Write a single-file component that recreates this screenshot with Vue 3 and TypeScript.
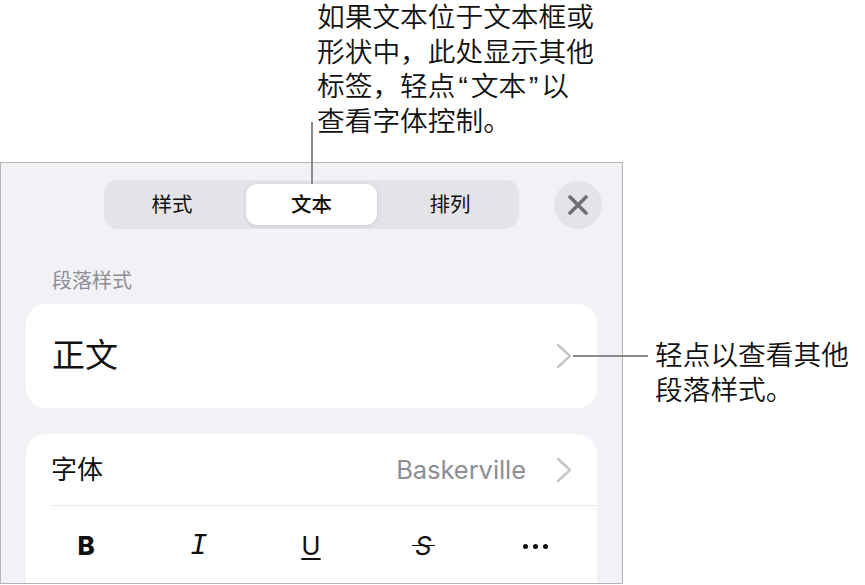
<script setup lang="ts">
const tabs: { label: string; active?: boolean }[] = [
  { label: '样式' },
  { label: '文本', active: true },
  { label: '排列' },
]
</script>

<template>
  <div class="page">
    <div class="top-note">
      <div>如果文本位于文本框或</div>
      <div>形状中，此处显示其他</div>
      <div>标签，轻点<span class="quote">“</span>文本<span class="quote">”</span>以</div>
      <div>查看字体控制。</div>
    </div>
    <section class="panel">
      <header class="bar">
        <div class="seg">
          <button v-for="t in tabs" :key="t.label" class="tab" :class="{ active: t.active }">{{ t.label }}</button>
        </div>
        <button class="close" aria-label="关闭">
          <svg width="20" height="20" viewBox="0 0 20 20"><path d="M2 2 18 18M18 2 2 18" stroke="#6f6f74" stroke-width="3.6" stroke-linecap="round" fill="none" /></svg>
        </button>
      </header>
      <div class="label">段落样式</div>
      <div class="card style-row">
        <span class="body-name">正文</span>
        <svg class="chev" width="16" height="26" viewBox="0 0 16 26"><path d="M2 2 14 13 2 24" stroke="#c5c5c7" stroke-width="2.4" fill="none" stroke-linecap="round" stroke-linejoin="round" /></svg>
      </div>
      <div class="card font-card">
        <div class="font-row">
          <span class="font-label">字体</span>
          <span class="font-val">Baskerville</span>
          <svg class="chev" width="16" height="26" viewBox="0 0 16 26"><path d="M2 2 14 13 2 24" stroke="#c5c5c7" stroke-width="2.4" fill="none" stroke-linecap="round" stroke-linejoin="round" /></svg>
        </div>
        <div class="fmt-row">
          <span class="fmt b">B</span>
          <span class="fmt i">I</span>
          <span class="fmt u">U</span>
          <span class="fmt s">S</span>
          <span class="fmt dots"><i></i><i></i><i></i></span>
        </div>
      </div>
    </section>
    <div class="leader-v"></div>
    <div class="leader-h"></div>
    <div class="side-note">
      <div>轻点以查看其他</div>
      <div>段落样式。</div>
    </div>
  </div>
</template>

<style scoped>
.page {
  position: relative;
  width: 865px;
  height: 585px;
  background: #fff;
  overflow: hidden;
  font-family: "Noto Sans CJK SC", "Noto Sans", sans-serif;
  color: #111;
}
.top-note {
  height: 162px;
  box-sizing: border-box;
  padding: 1px 0 0 317px;
  font-family: "Liberation Sans", "Noto Sans CJK SC", sans-serif;
  font-size: 27.7px;
  font-weight: 350;
  line-height: 34.5px;
  white-space: nowrap;
}
.quote {
  padding: 0 3px;
}
.panel {
  width: 623px;
  height: 422px;
  box-sizing: border-box;
  border: 1px solid #b4b4b4;
  background: #f1f1f6;
  padding: 17px 0 0 25px;
  overflow: hidden;
}
.bar {
  display: flex;
  align-items: center;
  margin-left: 78px;
  gap: 35px;
}
.seg {
  flex: none;
  width: 415px;
  height: 49px;
  box-sizing: border-box;
  padding: 4px;
  border-radius: 14px;
  background: #e3e3e8;
  display: grid;
  grid-template-columns: 1fr 131px 1fr;
  gap: 4px;
}
.tab {
  border: none;
  background: transparent;
  font: 400 20.5px "Noto Sans CJK SC", sans-serif;
  color: #111;
  padding: 0 0 3px;
  border-radius: 11px;
}
.tab:first-child {
  padding-right: 6px;
}
.tab:last-child {
  padding-left: 4px;
}
.tab.active {
  font-weight: 500;
  background: #fff;
  box-shadow: 0 1px 4px rgba(0, 0, 0, 0.12);
}
.close {
  flex: none;
  width: 48px;
  height: 48px;
  border: none;
  border-radius: 50%;
  background: #e3e3e8;
  padding: 0;
  display: flex;
  align-items: center;
  justify-content: center;
}
.label {
  margin: 36px 0 9px 26px;
  height: 30px;
  font-size: 20px;
  line-height: 30px;
  color: #8e8e93;
}
.card {
  background: #fff;
  border-radius: 20px;
  width: 571px;
}
.style-row {
  height: 104px;
  box-sizing: border-box;
  padding: 0 25px 0 26px;
  display: flex;
  align-items: center;
  justify-content: space-between;
}
.body-name {
  font-size: 33px;
  line-height: 1;
  margin-bottom: 6px;
}
.font-card {
  margin-top: 26px;
  height: 180px;
  padding-left: 25px;
  box-sizing: border-box;
}
.font-row {
  height: 71px;
  border-bottom: 1px solid #e8e8ec;
  display: flex;
  align-items: center;
  padding-right: 25px;
}
.font-label {
  font-size: 26px;
  line-height: 1;
  margin: 0 auto 3px 0;
}
.font-val {
  font: 400 25.6px Inter, "Noto Sans", sans-serif;
  letter-spacing: -0.1px;
  color: #8e8e93;
  margin-right: 30px;
}
.fmt-row {
  display: grid;
  grid-template-columns: repeat(5, 112.4px);
  margin-left: -25px;
  padding-left: 4px;
  height: 80px;
  align-items: center;
  justify-items: center;
}
.fmt {
  font-family: Inter, "Liberation Sans", sans-serif;
  font-size: 26px;
  line-height: 1;
  color: #111;
}
.b { font-weight: 800; }
.i { font-family: "Liberation Mono", monospace; font-style: italic; font-size: 29px; font-weight: 400; }
.u { text-decoration: underline; text-underline-offset: 3px; text-decoration-thickness: 1.5px; font-weight: 400; }
.s { position: relative; font-style: italic; font-weight: 400; }
.s::after {
  content: "";
  position: absolute;
  left: -3px;
  right: -3px;
  top: 11.5px;
  height: 1.5px;
  background: #111;
}
.dots { display: flex; gap: 5px; }
.dots i {
  width: 5px;
  height: 5px;
  border-radius: 50%;
  background: #111;
}
.leader-v {
  position: absolute;
  left: 311px;
  top: 122px;
  width: 2px;
  height: 62px;
  background: #8a8a8a;
}
.leader-h {
  position: absolute;
  left: 573px;
  top: 355px;
  width: 75px;
  height: 2px;
  background: #8a8a8a;
}
.side-note {
  position: absolute;
  left: 655px;
  top: 336px;
  font-size: 27.7px;
  font-weight: 350;
  line-height: 34.5px;
  white-space: nowrap;
}
</style>
